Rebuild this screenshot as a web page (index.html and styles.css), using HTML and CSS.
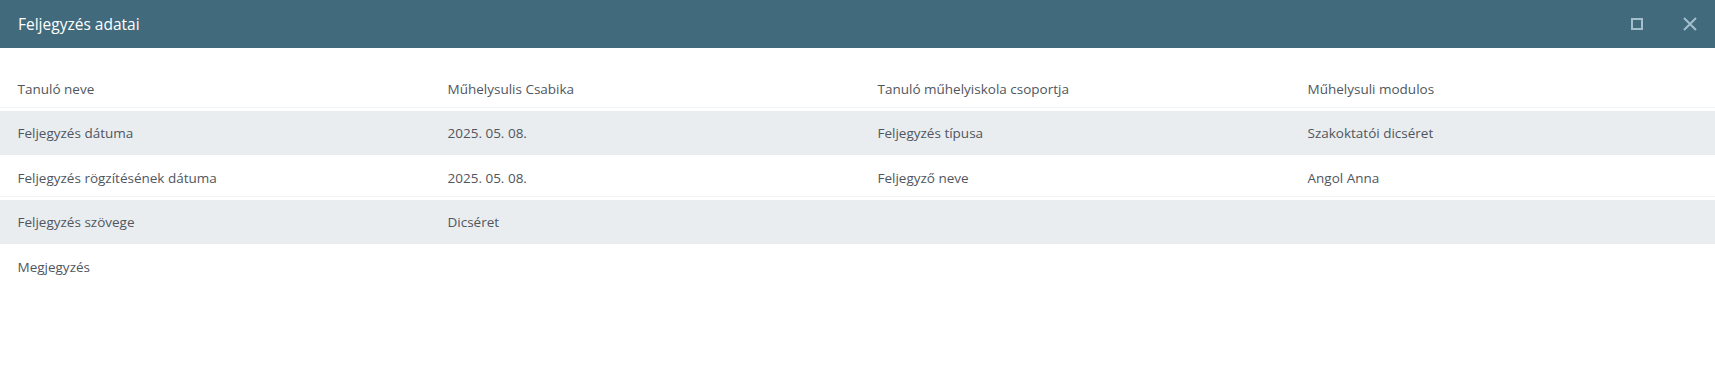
FILE: index.html
```html
<!DOCTYPE html>
<html lang="hu">
<head>
    <meta charset="UTF-8">
    <meta name="viewport" content="width=device-width, initial-scale=1.0">
    <title>Feljegyzés adatai</title>
    <link rel="stylesheet" href="styles.css">
</head>
<body>
    <div class="dialog">
        <div class="dialog-header">
            <span class="dialog-title">Feljegyzés adatai</span>
            <div class="dialog-actions">
                <button class="icon-btn" title="Teljes méret">
                    <svg width="14" height="14" viewBox="0 0 14 14"><rect x="2" y="2" width="10" height="10" fill="none" stroke="currentColor" stroke-width="2"/></svg>
                </button>
                <button class="icon-btn" title="Bezárás">
                    <svg width="16" height="16" viewBox="0 0 16 16"><path d="M2 2 L14 14 M14 2 L2 14" stroke="currentColor" stroke-width="2"/></svg>
                </button>
            </div>
        </div>

        <div class="dialog-body">
            <div class="row">
                <div class="cell">Tanuló neve</div>
                <div class="cell">Műhelysulis Csabika</div>
                <div class="cell">Tanuló műhelyiskola csoportja</div>
                <div class="cell">Műhelysuli modulos</div>
            </div>
            <div class="row alt">
                <div class="cell">Feljegyzés dátuma</div>
                <div class="cell">2025. 05. 08.</div>
                <div class="cell">Feljegyzés típusa</div>
                <div class="cell">Szakoktatói dicséret</div>
            </div>
            <div class="row">
                <div class="cell">Feljegyzés rögzítésének dátuma</div>
                <div class="cell">2025. 05. 08.</div>
                <div class="cell">Feljegyző neve</div>
                <div class="cell">Angol Anna</div>
            </div>
            <div class="row alt">
                <div class="cell">Feljegyzés szövege</div>
                <div class="cell">Dicséret</div>
                <div class="cell"></div>
                <div class="cell"></div>
            </div>
            <div class="row">
                <div class="cell">Megjegyzés</div>
                <div class="cell"></div>
                <div class="cell"></div>
                <div class="cell"></div>
            </div>
        </div>
    </div>
</body>
</html>
```

FILE: styles.css
```css
body { margin: 0; font-family: "Open Sans", "Liberation Sans", sans-serif; background: #fff; overflow: hidden; }
.dialog { width: 100%; }
.dialog-header { height: 48px; background: #426a7d; display: flex; align-items: center; justify-content: space-between; padding: 0 17px 0 18px; }
.dialog-title { color: #fff; font-size: 15.5px; }
.dialog-actions { display: flex; align-items: center; gap: 38px; }
.icon-btn { background: none; border: 0; padding: 0; color: #a3bfcc; display: flex; cursor: pointer; }
.dialog-body { padding-top: 18px; }
.row { display: grid; grid-template-columns: repeat(4, 430px); height: 44.5px; align-items: center; box-sizing: border-box; }
.row:not(.alt) { box-shadow: inset 0 -3px 0 #fff, inset 0 -4px 0 #f3f4f5; }
.row:last-child { box-shadow: none; }
.row.alt { background: #e9edf0; }
.cell { padding: 1px 0 0 17.5px; font-size: 13.5px; color: #50565e; }
```
